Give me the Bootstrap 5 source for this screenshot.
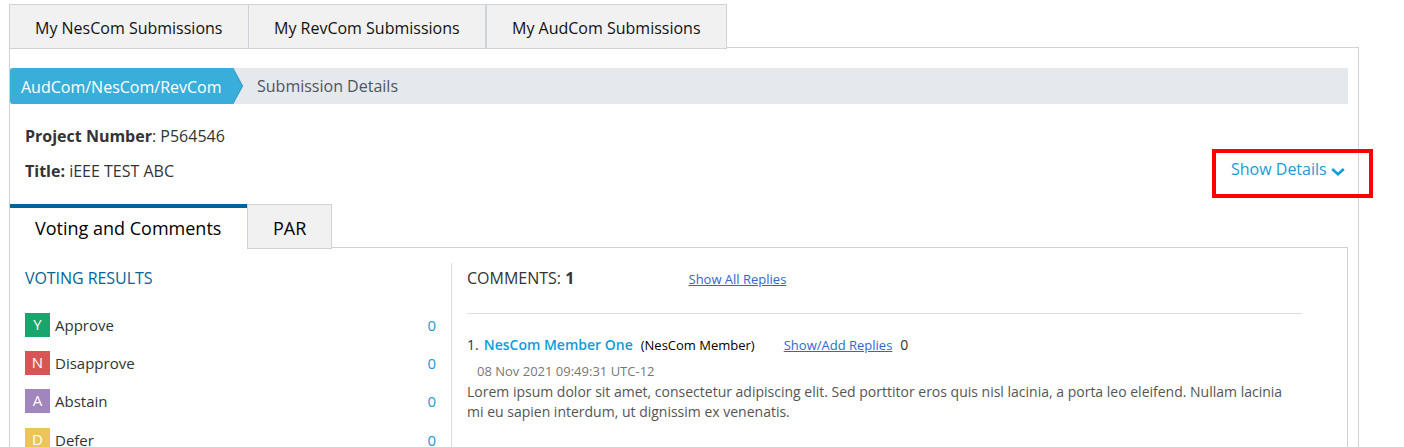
<!DOCTYPE html>
<html lang="en">
<head>
<meta charset="utf-8">
<meta name="viewport" content="width=device-width, initial-scale=1">
<title>Submission Details</title>
<link rel="stylesheet" href="https://cdn.jsdelivr.net/npm/bootstrap@5.3.0/dist/css/bootstrap.min.css">
<style>
html, body { height: 447px; overflow: hidden; }
body { font-family: "Open Sans", sans-serif; font-size: 16px; line-height: 24px; color: #333; background: #fff; }
.page-wrap { width: 1350px; margin-left: 9px; padding-top: 4px; }
.top-tabs, .sub-tabs { position: relative; border: 0; flex-wrap: nowrap; }
.top-tabs .nav-link { height: 45px; padding: 11px 0 0 25px; border: 1px solid #cdd3d8; border-radius: 0; background: #f1f1f1; color: #111; margin: 0; }
.tab-nes { width: 240px; } .tab-rev { width: 237px; border-left: 0 !important; } .tab-aud { width: 241px; }
.outer-panel { margin-top: -2px; height: 410px; border: 1px solid #d0d3d6; padding: 20px 10px 0 0; }
.crumbs { height: 36px; background: #e5e8ed; margin: 0; line-height: 36px; }
.crumb-home { width: 223px; background: #3aaedb; color: #fff; border-radius: 3px 0 0 3px; padding: 1px 0 0 11px; font-weight: 400; white-space: nowrap; }
.crumb-here { color: #50555c; padding-left: 14px; }
.crumb-arrow { display: block; width: 10px; height: 36px; }
.info { height: 100px; padding: 20px 0 0 15px; }
.info p { margin: 0 0 11px; }
.toggle-link { width: 161px; height: 49px; border: 4px solid #f00; margin: 25px -25px 0 0; color: #1a9ad6; padding: 4px 0 0 15px; position: relative; }
.toggle-link svg { margin: 10px 0 0 4px; }
.sub-tabs .nav-link { height: 45px; border-radius: 0; margin: 0; color: #000; font-size: 18px; padding: 0; }
.sub-tabs .tab-voting { width: 237px; border: 0; border-top: 4px solid #00629b; padding: 8px 0 0 25px; background: #fff; }
.sub-tabs .tab-par { width: 85px; border: 1px solid #cdd3d8; background: #f1f1f1; padding: 11px 0 0 25px; }
.inner-panel { margin-top: -2px; height: 201px; border: 1px solid #d0d3d6; border-left: 0; border-bottom: 0; overflow: hidden; }
.votes { width: 441px; padding: 18px 15px 0; }
.votes h2 { font-size: 16px; line-height: 24px; color: #006699; font-weight: 400; margin: 0 0 23px; letter-spacing: -.06px; }
.vote-row { height: 38.2px; font-size: 15px; line-height: 25px; }
.vote-key { width: 25px; height: 24px; color: #fff; text-align: center; line-height: 23px; margin-right: 5px; }
.vote-row .vote-count { color: #1a9ad6; }
.comments { margin-top: 15px; width: 851px; padding-left: 15px; border-left: 1px solid #dadcdf; }
.comments-head { height: 51px; border-bottom: 1px solid #dddfe1; padding-top: 3px; }
.comments-title { width: 221.5px; }
.reply-link { color: #3366cc; font-size: 13px; }
.comments-head .reply-link { padding-top: 1px; }
.entry-line { margin-top: 19px; height: 24px; font-size: 14px; white-space: pre; }
.member { color: #109cd8; font-weight: 600; margin-left: 5px; }
.role { color: #000; font-size: 13px; margin-left: 8px; width: 143px; }
.stamp { font-size: 13px; line-height: 20px; padding: 4px 0 0 10px; height: 25px; color: #777; }
.entry-text { font-size: 14px; line-height: 20px; color: #555; }
</style>
<script src="https://cdn.jsdelivr.net/npm/bootstrap@5.3.0/dist/js/bootstrap.bundle.min.js"></script>
</head>
<body>
<main class="page-wrap">
  <nav class="nav nav-tabs top-tabs">
    <a class="nav-link tab-nes" href="#"><span>My NesCom Submissions</span></a>
    <a class="nav-link tab-rev" href="#"><span>My RevCom Submissions</span></a>
    <a class="nav-link tab-aud" href="#"><span>My AudCom Submissions</span></a>
  </nav>
  <section class="outer-panel">
    <div class="crumbs d-flex">
      <div class="crumb-home">AudCom/NesCom/RevCom</div>
      <svg class="crumb-arrow" viewBox="0 0 10 36"><path d="M0 0L10 18L0 36Z" fill="#3aaedb"/><path d="M0 0L9.6 18L0 36" fill="none" stroke="#2b8fb8" stroke-width=".7"/></svg>
      <div class="crumb-here">Submission Details</div>
    </div>
    <div class="info d-flex justify-content-between">
      <div><p><strong>Project Number</strong>: P564546</p><p><strong>Title:</strong> iEEE TEST ABC</p></div>
      <div class="toggle-link d-flex align-items-start"><span>Show Details</span><svg width="14" height="10" viewBox="0 0 14 10"><path d="M1.2 2L7 7.2L12.8 2" fill="none" stroke="#109cd8" stroke-width="2.6"/></svg></div>
    </div>
    <nav class="nav nav-tabs sub-tabs">
      <a class="nav-link tab-voting" href="#">Voting and Comments</a>
      <a class="nav-link tab-par" href="#">PAR</a>
    </nav>
    <div class="inner-panel d-flex">
      <div class="votes">
        <h2>VOTING RESULTS</h2>
        <div class="vote-row d-flex"><span class="vote-key" style="background:#1aa56c">Y</span><span>Approve</span><span class="vote-count ms-auto">0</span></div>
        <div class="vote-row d-flex"><span class="vote-key" style="background:#d95454">N</span><span>Disapprove</span><span class="vote-count ms-auto">0</span></div>
        <div class="vote-row d-flex"><span class="vote-key" style="background:#a186be">A</span><span>Abstain</span><span class="vote-count ms-auto">0</span></div>
        <div class="vote-row d-flex"><span class="vote-key" style="background:#ebc55c">D</span><span>Defer</span><span class="vote-count ms-auto">0</span></div>
      </div>
      <div class="comments">
        <div class="comments-head d-flex"><span class="comments-title">COMMENTS: <strong>1</strong></span><a class="reply-link" href="#">Show All Replies</a></div>
        <div class="entry-line d-flex"><span>1.</span><span class="member">NesCom Member One</span><span class="role">(NesCom Member)</span><a class="reply-link" href="#">Show/Add Replies</a><span class="reply-count ms-2">0</span></div>
        <div class="stamp">08 Nov 2021 09:49:31 UTC-12</div>
        <div class="entry-text">Lorem ipsum dolor sit amet, consectetur adipiscing elit. Sed porttitor eros quis nisl lacinia, a porta leo eleifend. Nullam lacinia<br>mi eu sapien interdum, ut dignissim ex venenatis.</div>
      </div>
    </div>
  </section>
</main>
</body>
</html>
